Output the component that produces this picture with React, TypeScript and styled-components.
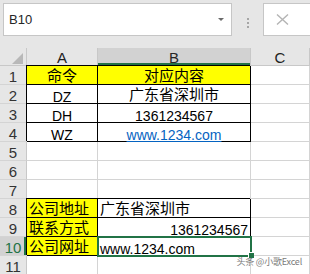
import React from "react";
import styled, { createGlobalStyle, css } from "styled-components";

const GlobalStyle = createGlobalStyle`
    html, body {
        margin: 0;
        padding: 0;
        background: #ffffff;
    }
    body {
        font-family: "Liberation Sans", "Noto Sans CJK SC", sans-serif;
    }
`;

const Window = styled.div`
    position: relative;
    width: 310px;
    height: 274px;
    overflow: hidden;
    background: #ffffff;
`;

const Toolbar = styled.div`
    display: flex;
    align-items: flex-start;
    height: 48px;
    padding: 3px 0 0 3px;
    box-sizing: border-box;
    background: #e6e6e6;
`;

const NameBox = styled.div`
    display: flex;
    align-items: center;
    justify-content: space-between;
    width: 229px;
    height: 33px;
    box-sizing: border-box;
    padding: 0 7px 0 5px;
    border: 1px solid #c6c6c6;
    background: #ffffff;
    font-size: 13px;
    color: #262626;
`;

const Caret = styled.div`
    width: 0;
    height: 0;
    border-left: 3px solid transparent;
    border-right: 3px solid transparent;
    border-top: 3px solid #6a6a6a;
`;

const Grip = styled.div`
    display: flex;
    flex-direction: column;
    gap: 2px;
    margin: 15px 14px 0 15px;
    span {
        width: 2px;
        height: 2px;
        background: #a6a6a6;
    }
`;

const FormulaBox = styled.div`
    display: flex;
    align-items: center;
    flex: 1;
    height: 33px;
    box-sizing: border-box;
    padding-left: 12px;
    border: 1px solid #c6c6c6;
    border-right: none;
    background: #ffffff;
`;

const Sheet = styled.div`
    display: grid;
    grid-template-columns: 27px 71px 153px 1fr;
    grid-template-rows: 18px repeat(11, 19px);
    font-family: "Liberation Sans", "Noto Sans CJK SC", sans-serif;
`;

const Corner = styled.div`
    position: relative;
    background: #e6e6e6;
    border-right: 1px solid #c8c8c8;
    border-bottom: 1px solid #c8c8c8;
    box-sizing: border-box;
    &::after {
        content: "";
        position: absolute;
        right: 3px;
        bottom: 1px;
        width: 0;
        height: 0;
        border-left: 11px solid transparent;
        border-bottom: 11px solid #b8b8b8;
    }
`;

const ColHead = styled.div<{ $active?: boolean }>`
    display: flex;
    align-items: center;
    justify-content: center;
    box-sizing: border-box;
    padding-top: 2px;
    background: ${(p) => (p.$active ? "#d2d2d2" : "#e6e6e6")};
    border-right: 1px solid #c8c8c8;
    border-bottom: 1px solid #c8c8c8;
    font-size: 15px;
    color: #222222;
    ${(p) =>
        p.$active &&
        css`
            color: #217346;
            box-shadow: inset 0 -2px 0 #217346;
            color: #262626;
        `}
`;

const RowHead = styled.div<{ $active?: boolean }>`
    display: flex;
    align-items: flex-end;
    justify-content: center;
    box-sizing: border-box;
    background: ${(p) => (p.$active ? "#d2d2d2" : "#e6e6e6")};
    border-right: 1px solid #c8c8c8;
    border-bottom: 1px solid #d4d4d4;
    font-size: 15px;
    line-height: 15px;
    color: ${(p) => (p.$active ? "#217346" : "#333333")};
    ${(p) =>
        p.$active &&
        css`
            box-shadow: inset -2px 0 0 #217346;
        `}
`;

type Align = "left" | "center" | "right";

const Cell = styled.div<{
    $fill?: boolean;
    $align?: Align;
    $box?: boolean;
    $zh?: boolean;
    $selected?: boolean;
}>`
    position: relative;
    display: flex;
    align-items: flex-end;
    justify-content: ${(p) =>
        p.$align === "center" ? "center" : p.$align === "right" ? "flex-end" : "flex-start"};
    box-sizing: border-box;
    padding: 0 2px 0 2px;
    overflow: visible;
    white-space: nowrap;
    background: ${(p) => (p.$fill ? "#ffff00" : "#ffffff")};
    border-right: 1px solid ${(p) => (p.$box ? "#000000" : "#d4d4d4")};
    border-bottom: 1px solid ${(p) => (p.$box ? "#000000" : "#d4d4d4")};
    font-size: ${(p) => (p.$zh ? "15px" : "14px")};
    line-height: ${(p) => (p.$zh ? "14px" : "12px")};
    padding-bottom: ${(p) => (p.$zh ? "1px" : "0")};
    color: #000000;
    ${(p) =>
        p.$box &&
        css`
            box-shadow: -1px -1px 0 #000000;
        `}
    ${(p) =>
        p.$selected &&
        css`
            z-index: 2;
            outline: 2px solid #217346;
            outline-offset: -1px;
            &::after {
                content: "";
                position: absolute;
                right: -4px;
                bottom: -3px;
                width: 5px;
                height: 5px;
                background: #217346;
                border-left: 1px solid #ffffff;
                border-top: 1px solid #ffffff;
            }
        `}
`;

const Link = styled.span`
    color: #0563c1;
    text-decoration: underline;
    text-underline-offset: 1px;
`;

const Watermark = styled.div`
    position: absolute;
    right: 8px;
    bottom: 7px;
    font-family: "Noto Sans CJK SC", sans-serif;
    font-size: 9px;
    line-height: 10px;
    color: #7a7a7a;
    text-shadow: 0 0 2px #ffffff;
    letter-spacing: -0.2px;
`;

interface CellData {
    text?: React.ReactNode;
    fill?: boolean;
    align?: Align;
    box?: boolean;
    zh?: boolean;
    selected?: boolean;
}

const rows: CellData[][] = [
    [
        { text: "命令", fill: true, align: "center", box: true, zh: true },
        { text: "对应内容", fill: true, align: "center", box: true, zh: true },
    ],
    [
        { text: "DZ", align: "center", box: true },
        { text: "广东省深圳市", align: "center", box: true, zh: true },
    ],
    [
        { text: "DH", align: "center", box: true },
        { text: "1361234567", align: "center", box: true },
    ],
    [
        { text: "WZ", align: "center", box: true },
        { text: <Link>www.1234.com</Link>, align: "center", box: true },
    ],
    [{}, {}],
    [{}, {}],
    [{}, {}],
    [
        { text: "公司地址", fill: true, box: true, zh: true },
        { text: "广东省深圳市", box: true, zh: true },
    ],
    [
        { text: "联系方式", fill: true, box: true, zh: true },
        { text: "1361234567", align: "right", box: true },
    ],
    [
        { text: "公司网址", fill: true, box: true, zh: true },
        { text: "www.1234.com", box: true, selected: true },
    ],
    [{}, {}],
];

export default function App() {
    return (
        <Window>
            <GlobalStyle />
            <Toolbar>
                <NameBox>
                    <span>B10</span>
                    <Caret />
                </NameBox>
                <Grip>
                    <span />
                    <span />
                    <span />
                </Grip>
                <FormulaBox>
                    <svg width="13" height="11" viewBox="0 0 13 11">
                        <path d="M1 0.5 L12 10.5 M12 0.5 L1 10.5" stroke="#b4b4b4" strokeWidth="1.4" fill="none" />
                    </svg>
                </FormulaBox>
            </Toolbar>
            <Sheet>
                <Corner />
                <ColHead>A</ColHead>
                <ColHead $active>B</ColHead>
                <ColHead>C</ColHead>
                {rows.map((row, i) => (
                    <React.Fragment key={i}>
                        <RowHead $active={i === 9}>{i + 1}</RowHead>
                        {row.map((c, j) => (
                            <Cell
                                key={j}
                                $fill={c.fill}
                                $align={c.align}
                                $box={c.box}
                                $zh={c.zh}
                                $selected={c.selected}
                            >
                                {c.text}
                            </Cell>
                        ))}
                        <Cell />
                    </React.Fragment>
                ))}
            </Sheet>
            <Watermark>头条 @小歌Excel</Watermark>
        </Window>
    );
}
